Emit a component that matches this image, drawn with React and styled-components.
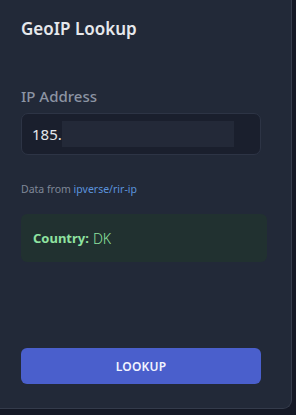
import React from "react";
import styled, { createGlobalStyle } from "styled-components";

const Global = createGlobalStyle`
  html, body { margin: 0; padding: 0; background: #141825; }
  body { font-family: "Noto Sans", "Open Sans", sans-serif; }
  * { box-sizing: border-box; }
`;

const Card = styled.div`
  width: 292px;
  height: 409px;
  background: #222938;
  border-right: 1px solid #343b4b;
  border-bottom: 1px solid #343b4b;
  border-bottom-right-radius: 9px;
  padding: 17px 31px 24px 21px;
  display: flex;
  flex-direction: column;
`;

const Title = styled.h2`
  margin: 0;
  font-size: 17px;
  line-height: 24px;
  font-weight: 600;
  color: #e6e8ec;
`;

const Label = styled.label`
  margin-top: 44px;
  font-size: 15px;
  line-height: 22px;
  font-weight: 500;
  color: #8c94a3;
`;

const InputBox = styled.div`
  margin-top: 6px;
  height: 42px;
  width: 240px;
  background: #1a1f2d;
  border: 1px solid #2d3445;
  border-radius: 7px;
  display: flex;
  align-items: center;
  padding-left: 10px;
  font-size: 15px;
  color: #e4e6ea;
`;

const Redacted = styled.span`
  display: inline-block;
  width: 172px;
  height: 26px;
  background: #232938;
  margin-left: 0;
`;

const Source = styled.p`
  margin: 26px 0 0;
  font-size: 10.5px;
  line-height: 16px;
  color: #7f8797;
`;

const Link = styled.a`
  color: #5b93dc;
  text-decoration: none;
`;

const Result = styled.div`
  margin-top: 17px;
  width: 246px;
  height: 48px;
  background: #213130;
  border-radius: 6px;
  display: flex;
  align-items: center;
  padding-left: 12px;
  font-size: 13px;
  color: #8fe3a0;
`;

const Key = styled.strong`
  font-weight: 700;
  margin-right: 4px;
`;

const Value = styled.span`
  font-weight: 300;
  font-size: 14px;
`;

const Button = styled.button`
  margin-top: auto;
  width: 240px;
  height: 36px;
  border: none;
  border-radius: 6px;
  background: #4a5fcc;
  color: #f2f4ff;
  font-family: inherit;
  font-size: 12px;
  font-weight: 600;
  letter-spacing: 0.2px;
`;

export default function App() {
  return (
    <>
      <Global />
      <Card>
        <Title>GeoIP Lookup</Title>
        <Label>IP Address</Label>
        <InputBox>
          185.<Redacted />
        </InputBox>
        <Source>
          Data from <Link href="#">ipverse/rir-ip</Link>
        </Source>
        <Result>
          <Key>Country:</Key>
          <Value>DK</Value>
        </Result>
        <Button>LOOKUP</Button>
      </Card>
    </>
  );
}
